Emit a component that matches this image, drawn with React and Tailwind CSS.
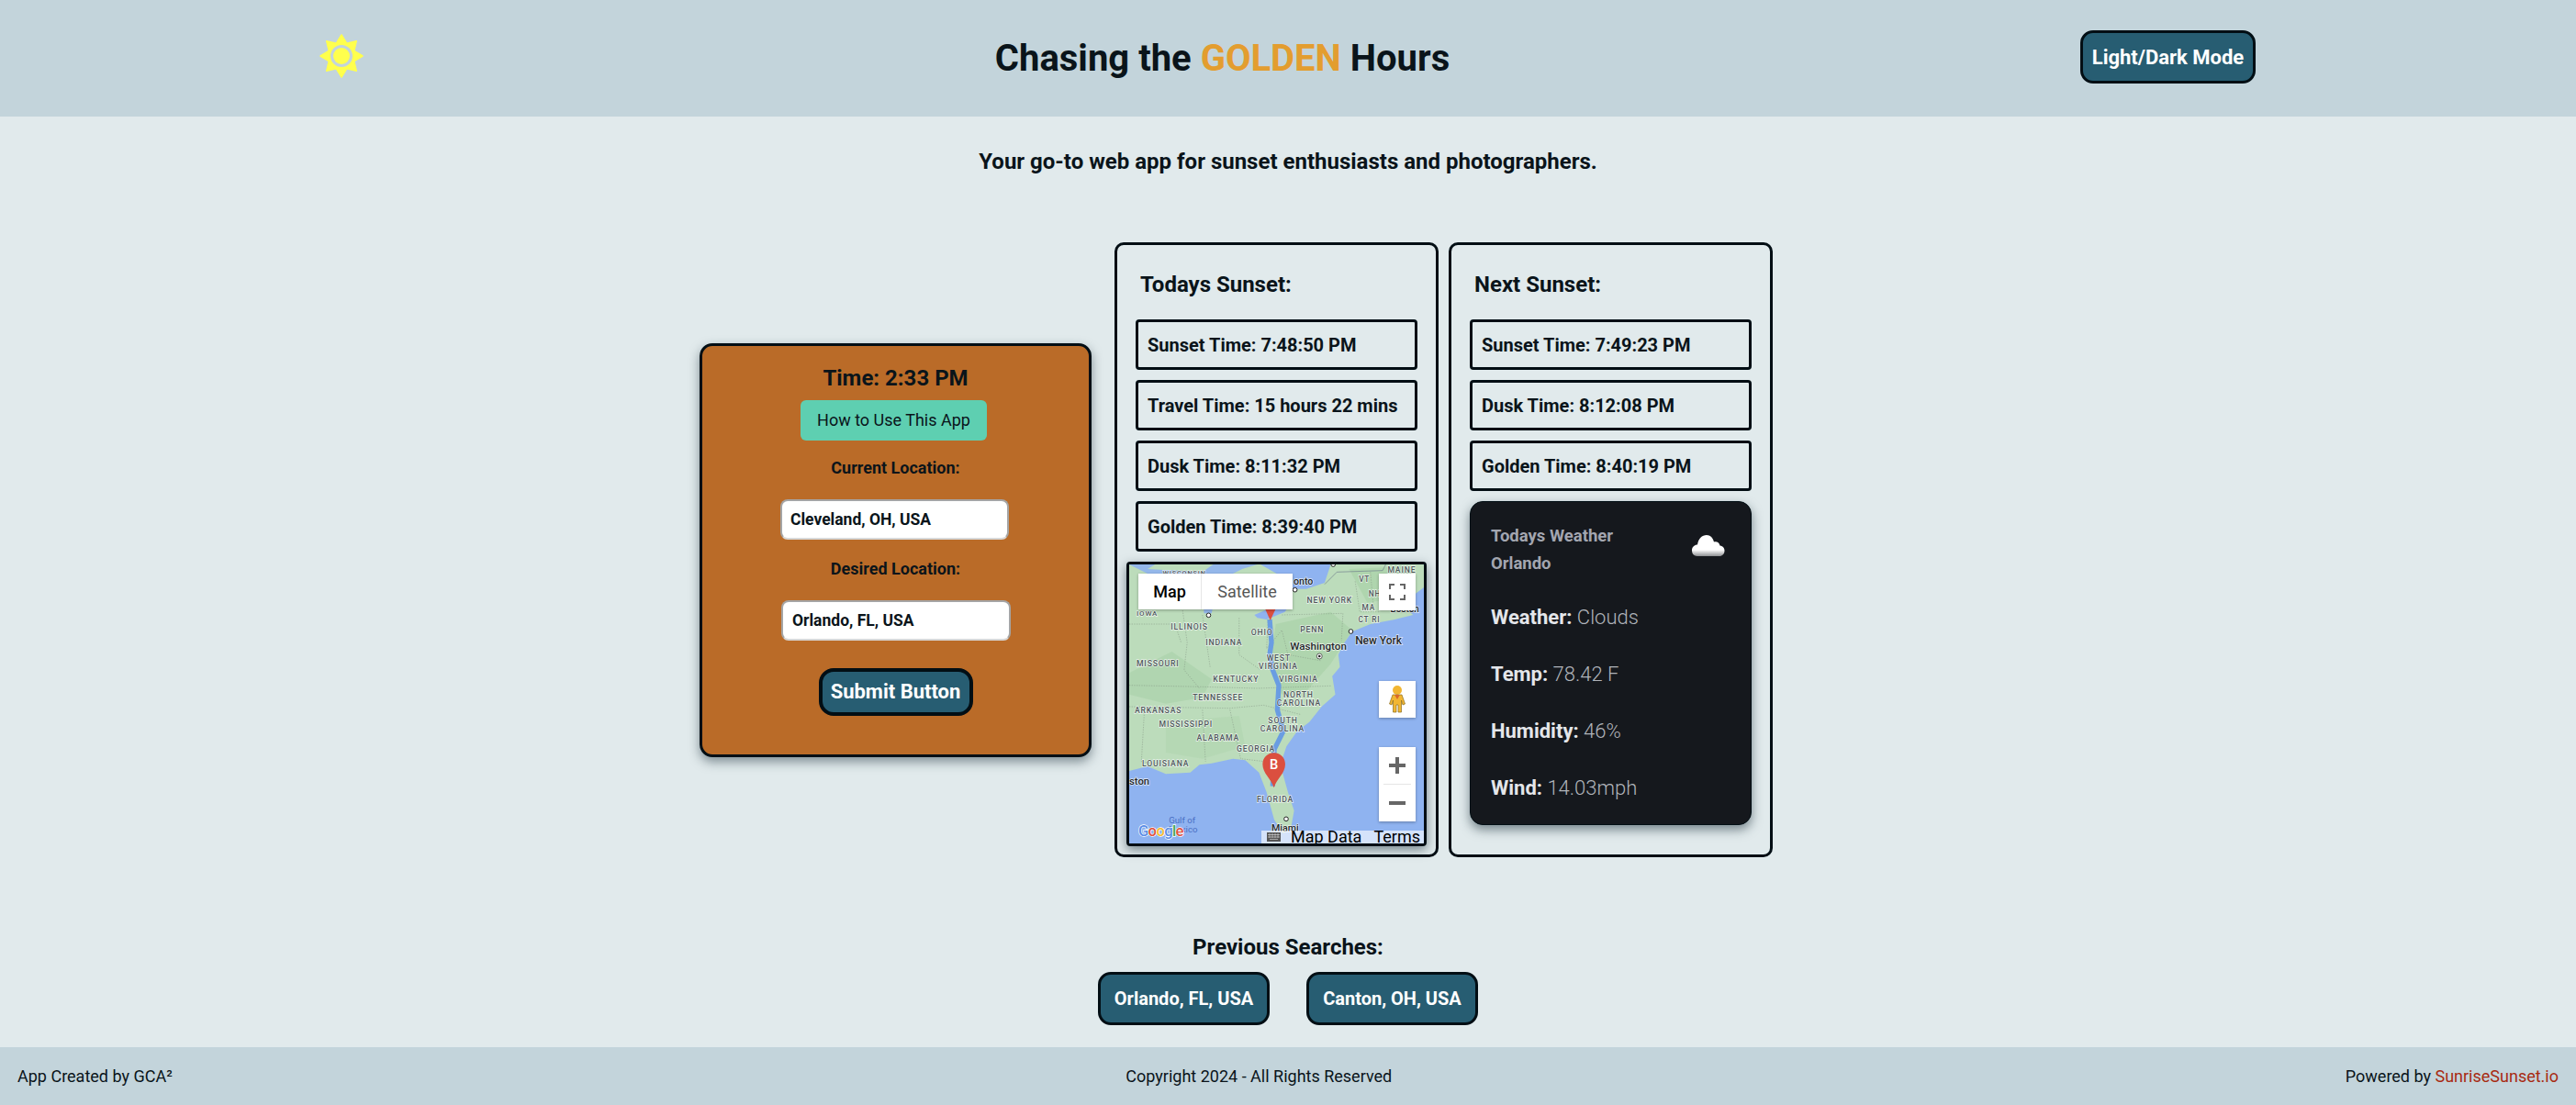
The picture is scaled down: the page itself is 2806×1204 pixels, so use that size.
const todays = ['Sunset Time: 7:48:50 PM', 'Travel Time: 15 hours 22 mins', 'Dusk Time: 8:11:32 PM', 'Golden Time: 8:39:40 PM']
const next = ['Sunset Time: 7:49:23 PM', 'Dusk Time: 8:12:08 PM', 'Golden Time: 8:40:19 PM']
const weather = [['Weather:', 'Clouds'], ['Temp:', '78.42 F'], ['Humidity:', '46%'], ['Wind:', '14.03mph']]

const mapLabels = [
  ['WISCONSIN', 170, 80, 22], ['IOWA', 84, 214, 24], ['ILLINOIS', 196, 258, 26], ['INDIANA', 310, 310, 26],
  ['OHIO', 459, 277, 26], ['PENN', 620, 266, 26], ['NEW YORK', 642, 172, 26], ['MAINE', 906, 72, 26],
  ['VT', 812, 102, 25], ['NH', 844, 150, 25], ['MA', 822, 196, 25], ['CT RI', 810, 234, 25],
  ['MISSOURI', 84, 378, 26], ['WEST', 510, 359, 26], ['VIRGINIA', 484, 386, 26], ['KENTUCKY', 334, 428, 26],
  ['VIRGINIA', 550, 428, 26], ['TENNESSEE', 268, 490, 26], ['NORTH', 565, 481, 26], ['CAROLINA', 543, 508, 26],
  ['ARKANSAS', 78, 532, 26], ['MISSISSIPPI', 158, 575, 26], ['SOUTH', 515, 563, 26], ['CAROLINA', 489, 590, 26],
  ['ALABAMA', 281, 620, 26], ['GEORGIA', 412, 658, 26], ['LOUISIANA', 102, 705, 26], ['FLORIDA', 478, 823, 26],
]

const cities = [
  ['onto', 598, 110, 32], ['Boston', 915, 200, 30], ['Washington', 587, 325, 35], ['New York', 800, 306, 36],
  ['ston', 60, 765, 34], ['Miami', 526, 918, 32],
]

function SunIcon() {
  return (
    <svg width="50" height="50" viewBox="-1 -1 50 50">
      <path
        fill="#ffff4d"
        stroke="#ffff4d"
        strokeWidth="1.500"
        strokeLinejoin="round"
        d="M24 1 L29.7 10.2 L40.3 7.700 L37.8 18.300 L47 24 L37.8 29.700 L40.3 40.300 L29.7 37.800 L24 47 L18.300 37.800 L7.700 40.300 L10.200 29.700 L1 24 L10.200 18.300 L7.700 7.700 L18.300 10.200 Z"
      />
      <circle cx="24" cy="24" r="10.500" fill="#ffff4d" stroke="#c3d4db" strokeWidth="3" />
    </svg>
  )
}

function CloudIcon() {
  return (
    <svg width="36" height="24" viewBox="0 0 36 24">
      <defs>
        <linearGradient id="cloudFill" x1="0" y1="0" x2="0" y2="1">
          <stop offset="0.7" stopColor="#ffffff" />
          <stop offset="1" stopColor="#8d8f92" />
        </linearGradient>
      </defs>
      <path
        fill="url(#cloudFill)"
        d="M6 23 C1 23 0 19 0 16.500 C0 13 3 10.500 6 10.500 C7 4 11 0 16 0 C20 0 23 3 24 7.500 C26 6.500 30 7.500 30.500 11.500 C34 12 35.500 14.500 35.500 17 C35.500 20.500 33 23 30 23 Z"
      />
    </svg>
  )
}

function MapDrawing() {
  return (
    <svg className="w-full h-full" viewBox="60 45 965 912" preserveAspectRatio="none">
      <rect x="60" y="45" width="965" height="912" fill="#8fb3f0" />
      <path
        fill="#bcdcbb"
        d="M60 45 L1025 45 L1025 120 L985 150 L960 185 L990 210 L930 225 L850 240 L790 265 L765 300 L745 340 L750 380 L725 410 L735 470 L690 510 L650 560 L610 590 L575 640 L555 700 L580 790 L600 850 L590 905 L565 925 L535 880 L510 790 L485 725 L440 685 L400 680 L330 695 L290 700 L260 725 L180 730 L120 705 L60 720 Z"
      />
      <path fill="#a9d1a8" d="M60 400 L200 330 L330 420 L300 480 L180 500 L60 470 Z" opacity="0.6" />
      <path fill="#a9d1a8" d="M540 240 L720 200 L790 260 L720 370 L640 460 L560 470 L520 380 Z" opacity="0.7" />
      <path fill="#a9d1a8" d="M780 60 L1000 50 L960 150 L840 170 Z" opacity="0.7" />
      <path fill="#a9d1a8" d="M180 560 L420 540 L440 640 L300 680 L180 660 Z" opacity="0.35" />
      <path fill="#8fb3f0" d="M60 45 L145 45 L120 60 L300 70 L335 45 L480 45 L430 60 L350 100 L335 180 L330 205 L305 205 L300 120 L270 80 L120 75 Z" opacity="0.9" />
      <path fill="#8fb3f0" d="M490 45 L720 45 L700 105 L640 125 L590 125 L560 85 Z" />
      <path fill="#8fb3f0" d="M470 210 L540 180 L590 170 L570 200 L510 225 L480 220 Z" />
      <g fill="none" stroke="#7f9080" strokeWidth="1.500" strokeDasharray="4 4">
        <path d="M60 440 L300 445 L480 450 L720 442" />
        <path d="M60 510 L390 515 L500 505 L620 535" />
        <path d="M235 195 L250 300 L240 390 L290 450" />
        <path d="M300 210 L325 380" />
        <path d="M420 220 L420 340 L490 390" />
        <path d="M560 210 L760 205 L755 295" />
        <path d="M300 520 L310 690" />
        <path d="M390 520 L425 680 L510 690" />
        <path d="M60 240 L210 240 L230 300" />
        <path d="M110 520 L100 690 L200 700" />
        <path d="M515 225 L510 320 L560 260 L580 340 L690 360" />
        <path d="M800 100 L815 200 L880 200" />
        <path d="M850 70 L860 185" />
      </g>
      <path d="M700 110 L740 70 L890 65 L900 45" fill="none" stroke="#6f7d8c" strokeWidth="2" />
      <path
        d="M520 225 L526 300 L520 340 L530 390 L550 440 L545 520 L565 590 L535 650 L530 770"
        fill="none"
        stroke="#6a9de2"
        strokeWidth="16"
        strokeLinejoin="round"
      />
      <g style={{ paintOrder: 'stroke' }} stroke="#ffffff" strokeOpacity="0.75" strokeWidth="4">
        {mapLabels.map(([label, x, y, size]) => (
          <text key={label + x} x={x} y={y} fontSize={size} letterSpacing="2.500" fontWeight="500" fill="#4f575b">
            {label}
          </text>
        ))}
        {cities.map(([label, x, y, size]) => (
          <text key={label} x={x} y={y} fontSize={size} fontWeight="500" fill="#24282b">
            {label}
          </text>
        ))}
        <text x="190" y="890" fontSize="29" fill="#4a6fc4" stroke="none">Gulf of</text>
        <text x="190" y="922" fontSize="29" fill="#4a6fc4" stroke="none">Mexico</text>
      </g>
      <g fill="#fff" stroke="#222" strokeWidth="3">
        <circle cx="320" cy="211" r="7" />
        <circle cx="603" cy="128" r="7" />
        <circle cx="786" cy="264" r="7" />
        <circle cx="574" cy="877" r="7" />
        <circle cx="728" cy="45" r="7" />
      </g>
      <circle cx="683" cy="345" r="9" fill="#fff" stroke="#222" strokeWidth="2" />
      <circle cx="683" cy="345" r="4" fill="#222" />
      <path fill="#db4f3f" d="M505 190 L540 190 L522 228 Z" />
      <path fill="#db4f3f" d="M534 661 C556 661 571 678 571 698 C571 728 543 745 534 775 C525 745 497 728 497 698 C497 678 512 661 534 661 Z" />
      <text x="534" y="715" fontSize="44" fontWeight="500" fill="#ffffff" textAnchor="middle">B</text>
      <text x="90" y="934" fontSize="50" fontWeight="500" stroke="#ffffff" strokeWidth="4" style={{ paintOrder: 'stroke' }}>
        <tspan fill="#5b8ee6">G</tspan>
        <tspan fill="#e0523f" dx="-2">o</tspan>
        <tspan fill="#f5bd32" dx="-2">o</tspan>
        <tspan fill="#5b8ee6" dx="-2">g</tspan>
        <tspan fill="#45a85a" dx="-2">l</tspan>
        <tspan fill="#e0523f" dx="-2">e</tspan>
      </text>
    </svg>
  )
}

function MapBox() {
  return (
    <div className="relative w-[327px] h-[310px] -ml-[15px] border-[3px] border-[#020e14] rounded-[4px] overflow-hidden shadow-[0_4px_12px_rgba(30,50,60,0.55)] font-['Roboto',sans-serif]">
      <MapDrawing />
      <div className="absolute left-[10px] top-[10px] flex h-[39px] bg-white shadow-[0_1px_3px_rgba(0,0,0,0.3)] text-[18px]">
        <div className="w-[69px] flex items-center justify-center font-medium text-black border-r border-[#e6e6e6]">Map</div>
        <div className="w-[99px] flex items-center justify-center text-[#565656]">Satellite</div>
      </div>
      <div className="absolute right-[9px] top-[10px] w-10 h-10 bg-white flex items-center justify-center shadow-[0_1px_3px_rgba(0,0,0,0.3)]">
        <svg width="18" height="18" viewBox="0 0 18 18" fill="none" stroke="#666666" strokeWidth="2">
          <path d="M1 6V1H6M12 1H17V6M17 12V17H12M6 17H1V12" />
        </svg>
      </div>
      <div className="absolute right-[9px] top-[127px] w-10 h-10 bg-white flex items-center justify-center shadow-[0_1px_3px_rgba(0,0,0,0.3)]">
        <svg width="18" height="30" viewBox="0 0 18 30">
          <circle cx="9" cy="5" r="5" fill="#f2b632" />
          <path fill="#f2b632" stroke="#8a6d20" strokeWidth="0.7" d="M4 10 H14 L17.500 20 L15 21 L13.500 16 V29 H10 V21 H8 V29 H4.500 V16 L3 21 L0.500 20 Z" />
          <path fill="#d9682c" d="M6 10 H12 L9 15 Z" />
        </svg>
      </div>
      <div className="absolute right-[9px] top-[199px] w-10 h-[81px] bg-white flex flex-col items-center shadow-[0_1px_3px_rgba(0,0,0,0.3)]">
        <div className="h-10 w-full flex items-center justify-center">
          <svg width="18" height="18" viewBox="0 0 18 18" fill="#666666"><path d="M7 0H11V7H18V11H11V18H7V11H0V7H7Z" /></svg>
        </div>
        <div className="w-[30px] h-px bg-[#e6e6e6]" />
        <div className="h-10 w-full flex items-center justify-center">
          <svg width="18" height="18" viewBox="0 0 18 18" fill="#666666"><path d="M0 7H18V11H0Z" /></svg>
        </div>
      </div>
      <div className="absolute right-0 bottom-0 h-[14px] w-[177px] flex items-end bg-[#ffffffa0] text-black text-[18px] leading-[14px]">
        <div className="w-[27px] h-[14px] flex items-center justify-center">
          <svg width="15" height="10" viewBox="0 0 15 10">
            <rect width="15" height="10" fill="#555555" />
            <path d="M1 2.500H14M1 5H14M3 7.500H12M3 1V6M6 1V6M9 1V6M12 1V6" stroke="#dddddd" strokeWidth="0.6" />
          </svg>
        </div>
        <span className="ml-[5px] whitespace-nowrap">Map Data</span>
        <span className="ml-[13px] whitespace-nowrap">Terms</span>
      </div>
    </div>
  )
}

function InfoBox({ text }) {
  return (
    <div className="w-[307px] h-[55px] -ml-[5px] flex items-center pl-[10px] border-[3px] border-[#020e14] rounded-[4px] text-[20px] font-bold whitespace-nowrap">
      {text}
    </div>
  )
}

function Column({ title, children }) {
  return (
    <div className="w-[353px] h-[670px] border-[3px] border-[#020e14] rounded-[10px] pl-[25px] pt-[29px] flex flex-col gap-[11px]">
      <h2 className="text-[24px] font-bold leading-[28px] mb-[13px]">{title}</h2>
      {children}
    </div>
  )
}

function App() {
  return (
    <div className="h-screen flex flex-col bg-[#e1eaec] text-[#0a141a] font-['Roboto',sans-serif]">
      <header className="h-[127px] shrink-0 bg-[#c3d4db] flex items-center justify-between pl-[347px] pr-[349px]">
        <div className="mb-[5px]"><SunIcon /></div>
        <h1 className="text-[40px] font-bold">
          Chasing the <span className="text-[#e39d2f]">GOLDEN</span> Hours
        </h1>
        <button className="w-[191px] h-[58px] mb-[3px] rounded-[14px] border-[3px] border-[#020e14] bg-[#275d72] text-white text-[22px] font-bold">
          Light/Dark Mode
        </button>
      </header>

      <p className="text-center text-[24px] font-bold leading-[30px] mt-[34px]">
        Your go-to web app for sunset enthusiasts and photographers.
      </p>

      <main className="flex items-center gap-[25px] pl-[762px] mt-[73px]">
        <section className="w-[427px] h-[451px] shrink-0 bg-[#ba6b28] border-[3px] border-[#020e14] rounded-[14px] shadow-[0_5px_12px_rgba(30,50,60,0.5)] flex flex-col items-center pt-[20px]">
          <div className="text-[24px] font-bold leading-[30px]">Time: 2:33 PM</div>
          <button className="w-[203px] h-[44px] mt-[9px] -ml-[4px] rounded-[6px] bg-[#5ecfb1] text-[18px]">How to Use This App</button>
          <label className="text-[18px] font-bold leading-[22px] mt-[19px]">Current Location:</label>
          <input
            readOnly
            value="Cleveland, OH, USA"
            className="w-[249px] h-[44px] mt-[23px] -ml-[2px] px-[9px] bg-white rounded-[8px] border-2 border-[#a5a5a5] border-b-[#d8d8d8] text-[17.5px] font-bold text-[#0a141a]"
          />
          <label className="text-[18px] font-bold leading-[22px] mt-[21px]">Desired Location:</label>
          <input
            readOnly
            value="Orlando, FL, USA"
            className="w-[250px] h-[44px] mt-[23px] ml-[1px] px-[10px] bg-white rounded-[8px] border-2 border-[#a5a5a5] border-b-[#d8d8d8] text-[17.5px] font-bold text-[#0a141a]"
          />
          <button className="w-[168px] h-[52px] mt-[30px] rounded-[16px] border-[4px] border-[#020e14] bg-[#275d72] text-white text-[22px] font-bold">
            Submit Button
          </button>
        </section>

        <div className="flex gap-[11px]">
          <Column title="Todays Sunset:">
            {todays.map((t) => <InfoBox key={t} text={t} />)}
            <MapBox />
          </Column>
          <Column title="Next Sunset:">
            {next.map((t) => <InfoBox key={t} text={t} />)}
            <div className="w-[307px] h-[353px] -ml-[5px] rounded-[14px] bg-[#15181d] border border-[#020e14] shadow-[0_5px_12px_rgba(30,50,60,0.55)] pl-[22px] pt-[22px] pr-[28px]">
              <div className="flex justify-between">
                <div className="text-[18.5px] font-bold leading-[30px] text-[#a3a6b0]">
                  Todays Weather
                  <br />
                  Orlando
                </div>
                <div className="mt-[14px]"><CloudIcon /></div>
              </div>
              <div className="flex flex-col gap-[32px] mt-[29px]">
                {weather.map(([k, v]) => (
                  <div key={k} className="text-[22px] leading-[30px] font-light text-[#b0b4ba]">
                    <span className="font-bold text-[#e4e6ea]">{k}</span> {v}
                  </div>
                ))}
              </div>
            </div>
          </Column>
        </div>
      </main>

      <section className="flex flex-col items-center mt-[84px]">
        <h3 className="text-[24px] font-bold leading-[28px]">Previous Searches:</h3>
        <div className="flex gap-[40px] mt-[13px]">
          <button className="w-[187px] h-[58px] rounded-[14px] border-[3px] border-[#020e14] bg-[#275d72] text-white text-[20px] font-bold">Orlando, FL, USA</button>
          <button className="w-[187px] h-[58px] rounded-[14px] border-[3px] border-[#020e14] bg-[#275d72] text-white text-[20px] font-bold">Canton, OH, USA</button>
        </div>
      </section>

      <footer className="mt-auto h-[63px] shrink-0 bg-[#c3d4db] flex items-center justify-between px-[19px] text-[18px]">
        <span>App Created by GCA²</span>
        <span>Copyright 2024 - All Rights Reserved</span>
        <span>Powered by <span className="text-[#a82a12]">SunriseSunset.io</span></span>
      </footer>
    </div>
  )
}

export default App
